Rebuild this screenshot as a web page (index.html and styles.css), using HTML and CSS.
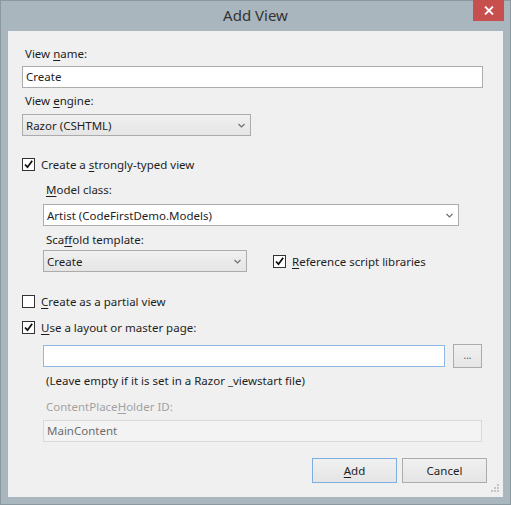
FILE: index.html
```html
<!DOCTYPE html>
<html>
<head>
<meta charset="utf-8">
<link rel="stylesheet" href="styles.css">
</head>
<body>
<div class="window">
  <div class="titlebar">
    <span class="title">Add View</span>
    <div class="close"><svg width="10" height="9" viewBox="0 0 10 9"><path d="M1 0.5 L9 8.5 M9 0.5 L1 8.5" stroke="#fff" stroke-width="1.8"/></svg></div>
  </div>
  <div class="client">
    <div class="label l-name">View <u>n</u>ame:</div>
    <div class="textbox tb-name">Create</div>
    <div class="label l-engine">View <u>e</u>ngine:</div>
    <div class="combo cb-engine"><span>Razor (CSHTML)</span><svg class="chev" width="7" height="5" viewBox="0 0 7 5"><path d="M0.5 1 L3.5 4 L6.5 1" fill="none" stroke="#707070" stroke-width="1.2"/></svg></div>

    <div class="check-row cr-strong"><span class="cbox checked"><svg width="11" height="11" viewBox="0 0 11 11"><path d="M2 5.5 L4.5 8.2 L9.2 1.8" fill="none" stroke="#111" stroke-width="1.8"/></svg></span><span>Create a <u>s</u>trongly-typed view</span></div>

    <div class="indent">
      <div class="label l-model"><u>M</u>odel class:</div>
      <div class="combo white cb-model"><span>Artist (CodeFirstDemo.Models)</span><svg class="chev" width="7" height="5" viewBox="0 0 7 5"><path d="M0.5 1 L3.5 4 L6.5 1" fill="none" stroke="#707070" stroke-width="1.2"/></svg></div>
      <div class="label l-scaffold">Sca<u>f</u>fold template:</div>
      <div class="scaffold-row">
        <div class="combo cb-scaffold"><span>Create</span><svg class="chev" width="7" height="5" viewBox="0 0 7 5"><path d="M0.5 1 L3.5 4 L6.5 1" fill="none" stroke="#707070" stroke-width="1.2"/></svg></div>
        <div class="check-row cr-ref"><span class="cbox checked"><svg width="11" height="11" viewBox="0 0 11 11"><path d="M2 5.5 L4.5 8.2 L9.2 1.8" fill="none" stroke="#111" stroke-width="1.8"/></svg></span><span><u>R</u>eference script libraries</span></div>
      </div>
    </div>

    <div class="check-row cr-partial"><span class="cbox"></span><span><u>C</u>reate as a partial view</span></div>
    <div class="check-row cr-layout"><span class="cbox checked"><svg width="11" height="11" viewBox="0 0 11 11"><path d="M2 5.5 L4.5 8.2 L9.2 1.8" fill="none" stroke="#111" stroke-width="1.8"/></svg></span><span><u>U</u>se a layout or master page:</span></div>

    <div class="indent">
      <div class="layout-row">
        <div class="textbox focus tb-layout"></div>
        <div class="btn btn-browse">...</div>
      </div>
      <div class="label help">(Leave empty if it is set in a Razor _viewstart file)</div>
      <div class="label disabled l-cph">ContentPlace<u>H</u>older ID:</div>
      <div class="textbox disabled-box tb-cph">MainContent</div>
    </div>

    <div class="buttons">
      <div class="btn default"><u>A</u>dd</div>
      <div class="btn">Cancel</div>
    </div>

    <svg class="grip" width="11" height="11" viewBox="0 0 11 11">
      <g fill="#c4c4c4">
        <rect x="8" y="0" width="2" height="2"/>
        <rect x="5" y="3" width="2" height="2"/><rect x="8" y="3" width="2" height="2"/>
        <rect x="2" y="6" width="2" height="2"/><rect x="5" y="6" width="2" height="2"/><rect x="8" y="6" width="2" height="2"/>
      </g>
    </svg>
  </div>
</div>
</body>
</html>
```

FILE: styles.css
```css
* { box-sizing: border-box; }
html, body { margin: 0; padding: 0; }
body {
  font-family: "Noto Sans", "Open Sans", "DejaVu Sans", sans-serif;
  font-size: 11.5px;
  color: #1e1e1e;
  width: 511px;
  height: 505px;
  overflow: hidden;
}
u { text-decoration: underline; text-underline-offset: 2px; }

.window {
  width: 511px;
  height: 505px;
  background: #aab6bd;
  border: 1px solid #8c989f;
  display: flex;
  flex-direction: column;
}
.titlebar {
  height: 30px;
  position: relative;
  display: flex;
  align-items: center;
  justify-content: center;
}
.title {
  font-size: 15px;
  color: #333;
  padding-bottom: 3px;
}
.close {
  position: absolute;
  right: 6px;
  top: -1px;
  width: 31px;
  height: 21px;
  background: #c7504f;
  display: flex;
  align-items: center;
  justify-content: center;
}
.client {
  flex: 1;
  margin: 0 7px 7px 7px;
  background: #f0f0f0;
  padding: 15px 20px 0 14px;
  position: relative;
}
.label {
  height: 16px;
  line-height: 16px;
  padding-left: 3px;
  white-space: nowrap;
}
.textbox {
  height: 22px;
  border: 1px solid #acacac;
  background: #fff;
  line-height: 20px;
  padding-left: 3px;
}
.tb-name { margin-top: 4px; }
.l-engine { margin-top: 5px; }
.combo {
  height: 22px;
  border: 1px solid #acacac;
  background: linear-gradient(#f0f0f0, #e5e5e5);
  display: flex;
  align-items: center;
  justify-content: space-between;
  padding: 0 5px 0 3px;
}
.combo.white { background: #fff; }
.cb-engine { margin-top: 5px; width: 229px; }

.check-row {
  height: 16px;
  display: flex;
  align-items: center;
  white-space: nowrap;
}
.cbox {
  width: 13px;
  height: 13px;
  border: 1px solid #333;
  background: #fff;
  margin-right: 6px;
  display: flex;
  align-items: center;
  justify-content: center;
  flex: none;
}
.cr-strong { margin-top: 20px; }

.indent { padding-left: 21px; }
.l-model { margin-top: 10px; }
.cb-model { margin-top: 6px; width: 416px; }
.l-scaffold { margin-top: 6px; }
.scaffold-row {
  margin-top: 2px;
  display: flex;
  align-items: center;
}
.cb-scaffold { width: 204px; }
.cr-ref { margin-left: 26px; }

.cr-partial { margin-top: 21px; }
.cr-layout { margin-top: 10px; }

.layout-row {
  margin-top: 9px;
  display: flex;
  align-items: center;
  height: 24px;
}
.tb-layout { width: 402px; }
.textbox.focus { border-color: #8fb8e2; }
.btn {
  height: 25px;
  width: 85px;
  border: 1px solid #acacac;
  background: linear-gradient(#f0f0f0, #e5e5e5);
  display: flex;
  align-items: center;
  justify-content: center;
}
.btn-browse {
  width: 29px;
  height: 24px;
  margin-left: 8px;
  font-size: 10px;
  color: #555;
  padding-bottom: 2px;
}
.help { margin-top: 5px; }
.disabled { color: #a2a2a2; }
.l-cph { margin-top: 10px; }
.tb-cph {
  margin-top: 5px;
  width: 439px;
}
.disabled-box {
  background: #f3f3f3;
  border-color: #d9d9d9;
  color: #6d6d6d;
}
.buttons {
  margin-top: 16px;
  display: flex;
  justify-content: flex-end;
  gap: 5px;
  margin-right: -4px;
}
.btn.default { border-color: #7eaee0; }
.grip {
  position: absolute;
  right: 3px;
  bottom: 2px;
}
```
